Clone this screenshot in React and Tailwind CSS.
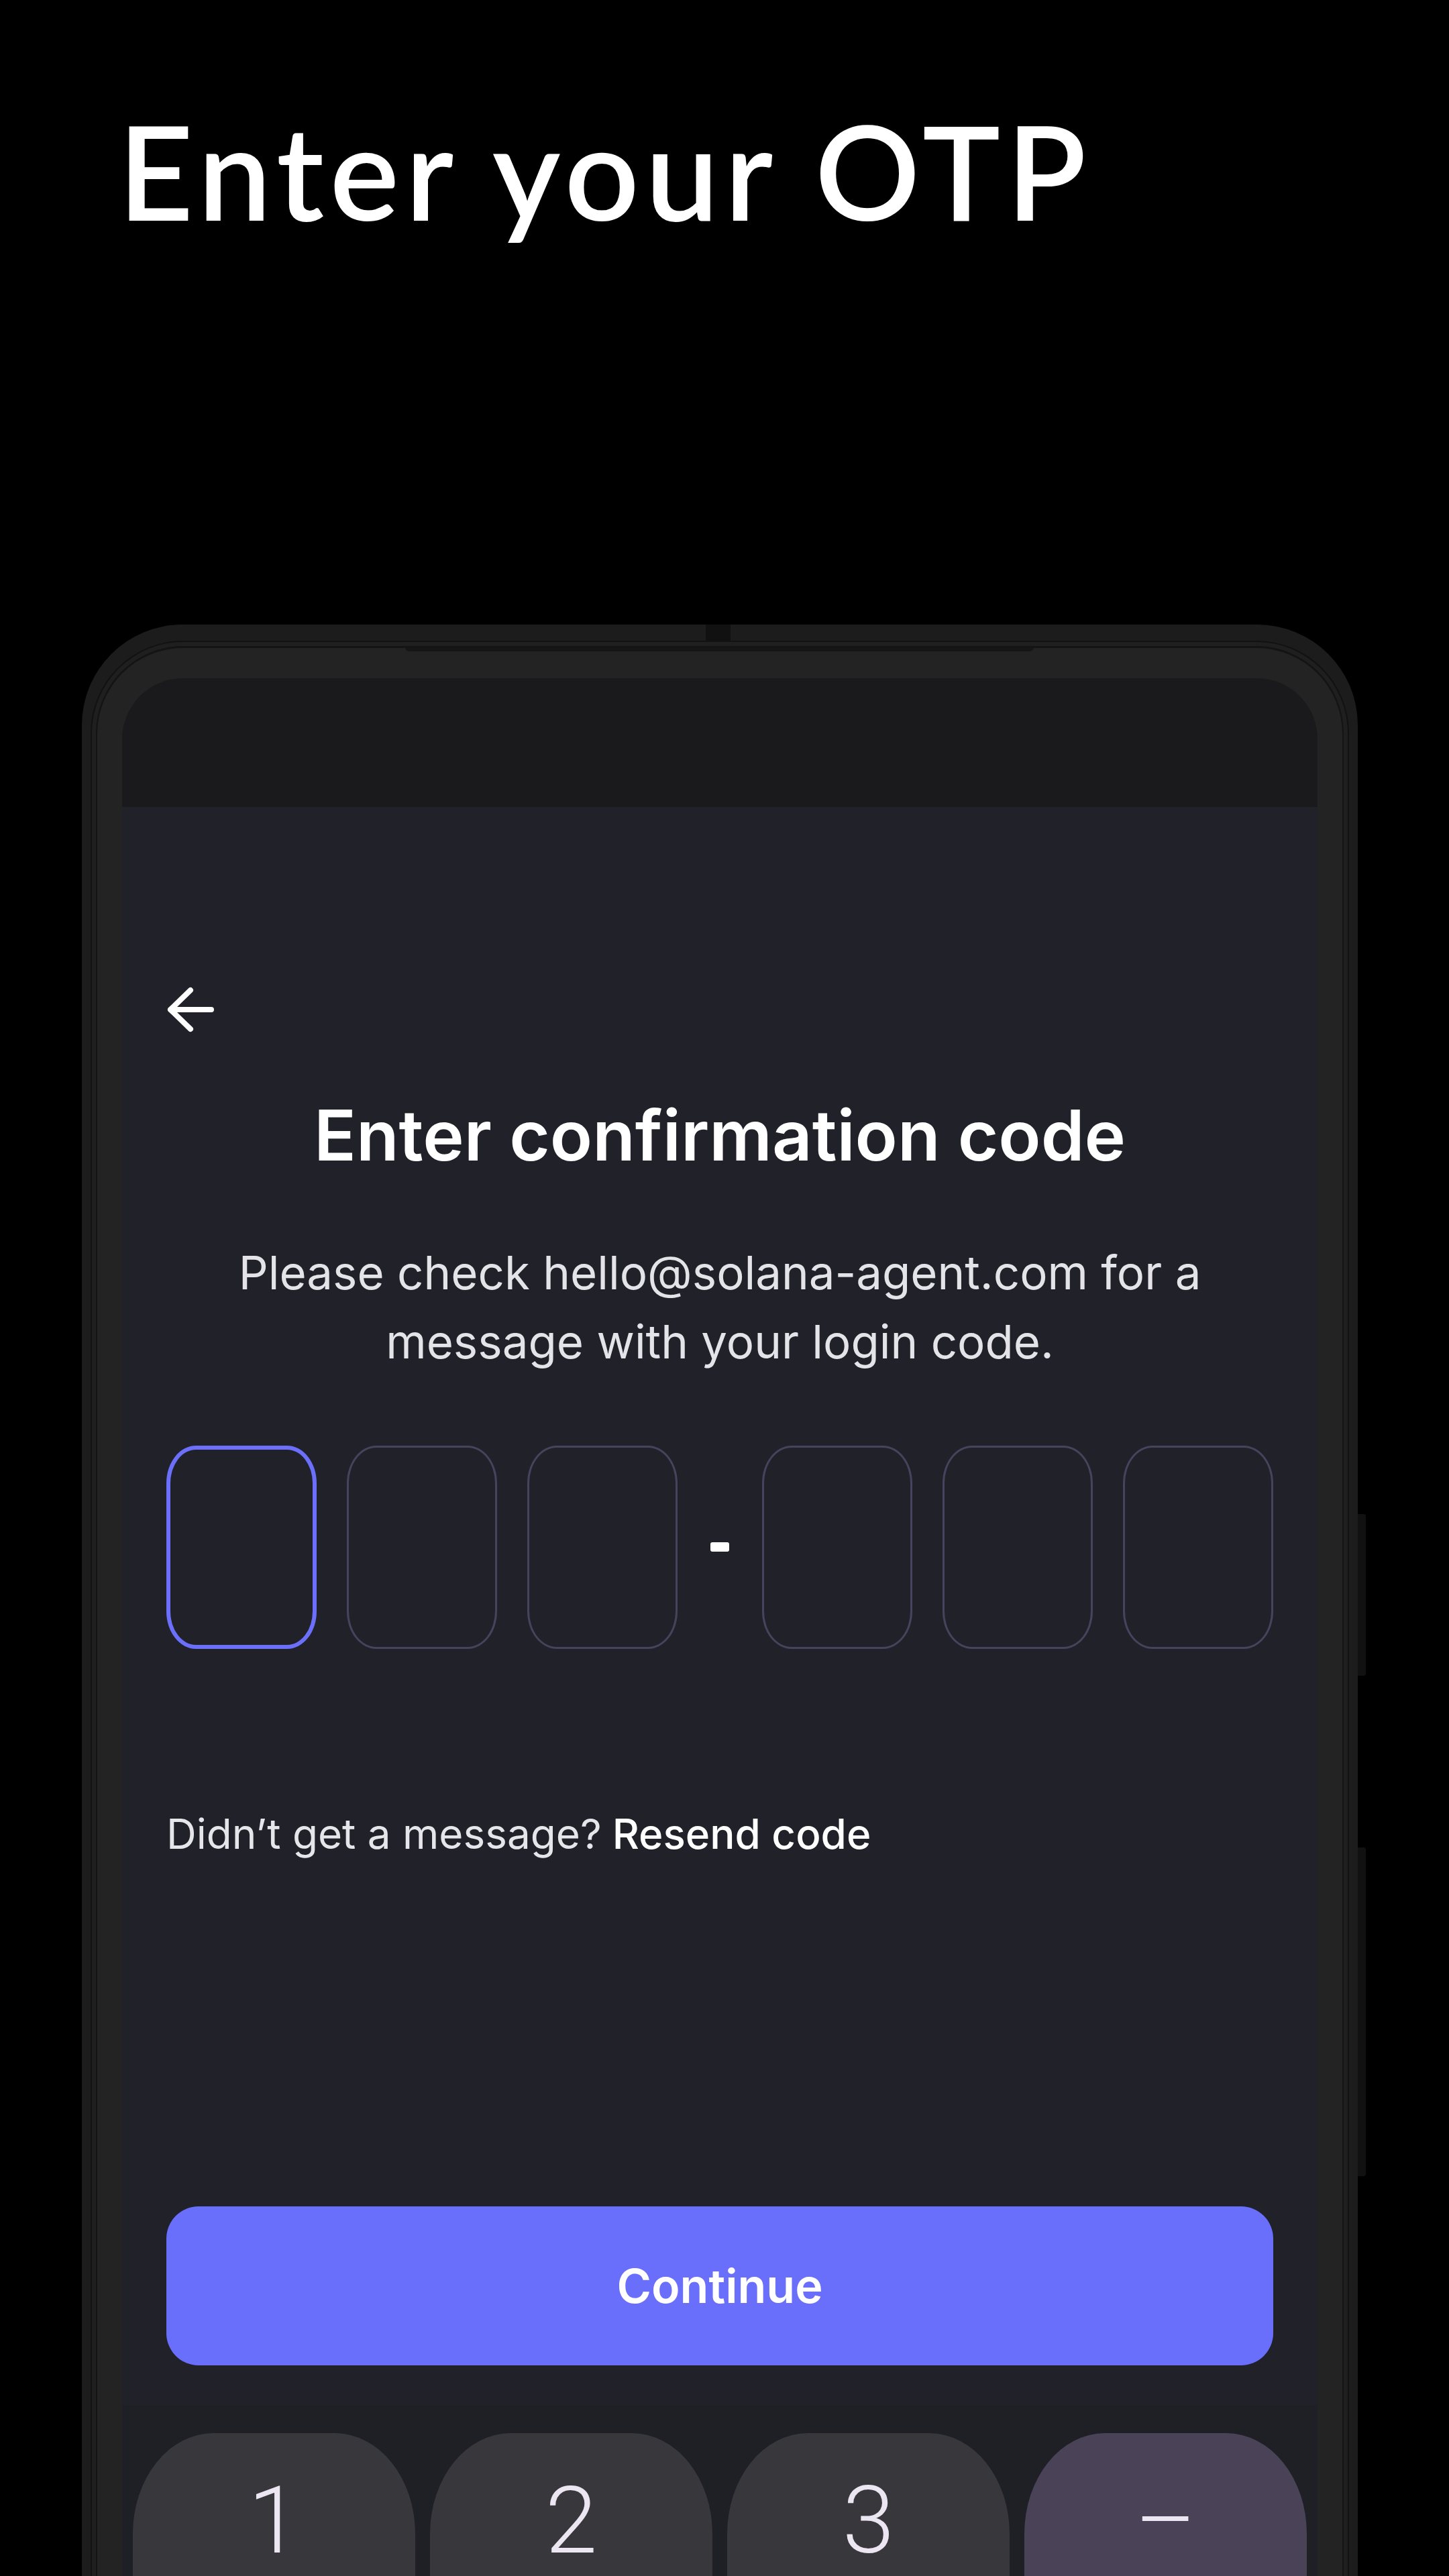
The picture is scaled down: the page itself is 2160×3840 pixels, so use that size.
import { useState } from "react";

function BackArrow() {
  return (
    <svg width="72" height="72" viewBox="0 0 72 72" fill="none">
      <path
        d="M67 35H6M36 6L6 35L36 64"
        stroke="#ffffff"
        strokeWidth="8"
        strokeLinecap="round"
        strokeLinejoin="round"
      />
    </svg>
  );
}

function CodeBox({ active }) {
  return (
    <div
      className={
        active
          ? "w-[224px] h-[303px] rounded-[44px/56px] border-[6px] border-[#6b6ffa]"
          : "w-[224px] h-[303px] rounded-[44px/56px] border-[3px] border-[#44445c]"
      }
    />
  );
}

// keys are cut by the bottom of the picture, so only the top corners are round
function Key({ label, accent }) {
  return (
    <div
      className={
        accent
          ? "h-[215px] rounded-tl-[120px_150px] rounded-tr-[120px_150px] bg-[#4a4358] flex justify-center pt-[60px]"
          : "h-[215px] rounded-tl-[120px_150px] rounded-tr-[120px_150px] bg-[#38373c] flex justify-center pt-[60px]"
      }
    >
      <span className="text-[140px] leading-none font-light text-[#ece6f2] font-['Roboto',sans-serif]">
        {label}
      </span>
    </div>
  );
}

function App() {
  const [code] = useState(["", "", "", "", "", ""]);

  return (
    <div className="w-[2160px] h-[3840px] bg-black overflow-hidden">
      <h1 className="pt-[157px] pl-[176px] text-[195px] leading-none font-semibold tracking-[9px] text-white font-['Lato',sans-serif]">
        Enter your OTP
      </h1>

      {/* phone */}
      <div className="relative ml-[122px] mt-[579px] w-[1902px]">
        <div className="bg-[#1c1c1c] rounded-t-[150px] pt-[24px] px-[13px]">
          <div className="bg-[#121212] rounded-t-[138px] pt-[2px] px-[2px]">
            <div className="bg-[#1f1f1f] rounded-t-[136px] pt-[6px] px-[6px]">
              <div className="bg-[#141414] rounded-t-[130px] pt-[3px] px-[2px]">
                <div className="bg-[#232323] rounded-t-[128px] pt-[45px] px-[37px]">
                  <div className="rounded-t-[91px] overflow-hidden bg-[#21212a] font-['Inter',sans-serif]">
                    <div className="h-[192px] bg-[#1a1a1c]" />

                    <div className="px-[66px]">
                      <div className="pt-[267px]">
                        <BackArrow />
                      </div>

                      <h2 className="mt-[88px] text-center text-[104px] leading-[1.2] font-semibold text-white">
                        Enter confirmation code
                      </h2>

                      <p className="mt-[91px] text-center text-[69px] leading-[103px] text-[#e4e4e8]">
                        Please check hello@solana-agent.com for a
                        <br />
                        message with your login code.
                      </p>

                      <div className="mt-[103px] flex items-center">
                        <div className="flex gap-[45px]">
                          {code.slice(0, 3).map((c, i) => (
                            <CodeBox key={i} active={i === 0} />
                          ))}
                        </div>
                        <div className="w-[126px] flex justify-center">
                          <div className="w-[28px] h-[14px] rounded-[3px] bg-white" />
                        </div>
                        <div className="flex gap-[45px]">
                          {code.slice(3).map((c, i) => (
                            <CodeBox key={i} />
                          ))}
                        </div>
                      </div>

                      <p className="mt-[237px] text-[62px] leading-[77px] text-[#e6e6ea]">
                        Didn’t get a message?
                        <span className="ml-[16px] font-medium text-white">Resend code</span>
                      </p>

                      <button className="mt-[517px] w-full h-[237px] rounded-[48px] bg-[#6a6ffb] text-white text-[70px] font-semibold">
                        Continue
                      </button>

                      <div className="h-[59px]" />
                    </div>

                    <div className="bg-[#1f1f26] px-[16px] pt-[42px] grid grid-cols-4 gap-[22px]">
                      <Key label="1" />
                      <Key label="2" />
                      <Key label="3" />
                      <Key label="–" accent />
                    </div>
                  </div>
                </div>
              </div>
            </div>
          </div>
        </div>

        {/* camera notch + speaker groove */}
        <div className="absolute left-[930px] top-0 w-[37px] h-[24px] bg-[#111111]" />
        <div className="absolute left-[482px] top-[34px] w-[937px] h-[6px] rounded-b-[6px] bg-[#161616]" />

        {/* side buttons */}
        <div className="absolute left-[1902px] top-[1326px] w-[12px] h-[241px] rounded-r-[3px] bg-[#111111]" />
        <div className="absolute left-[1902px] top-[1823px] w-[12px] h-[490px] rounded-r-[3px] bg-[#111111]" />
      </div>
    </div>
  );
}

export default App;
